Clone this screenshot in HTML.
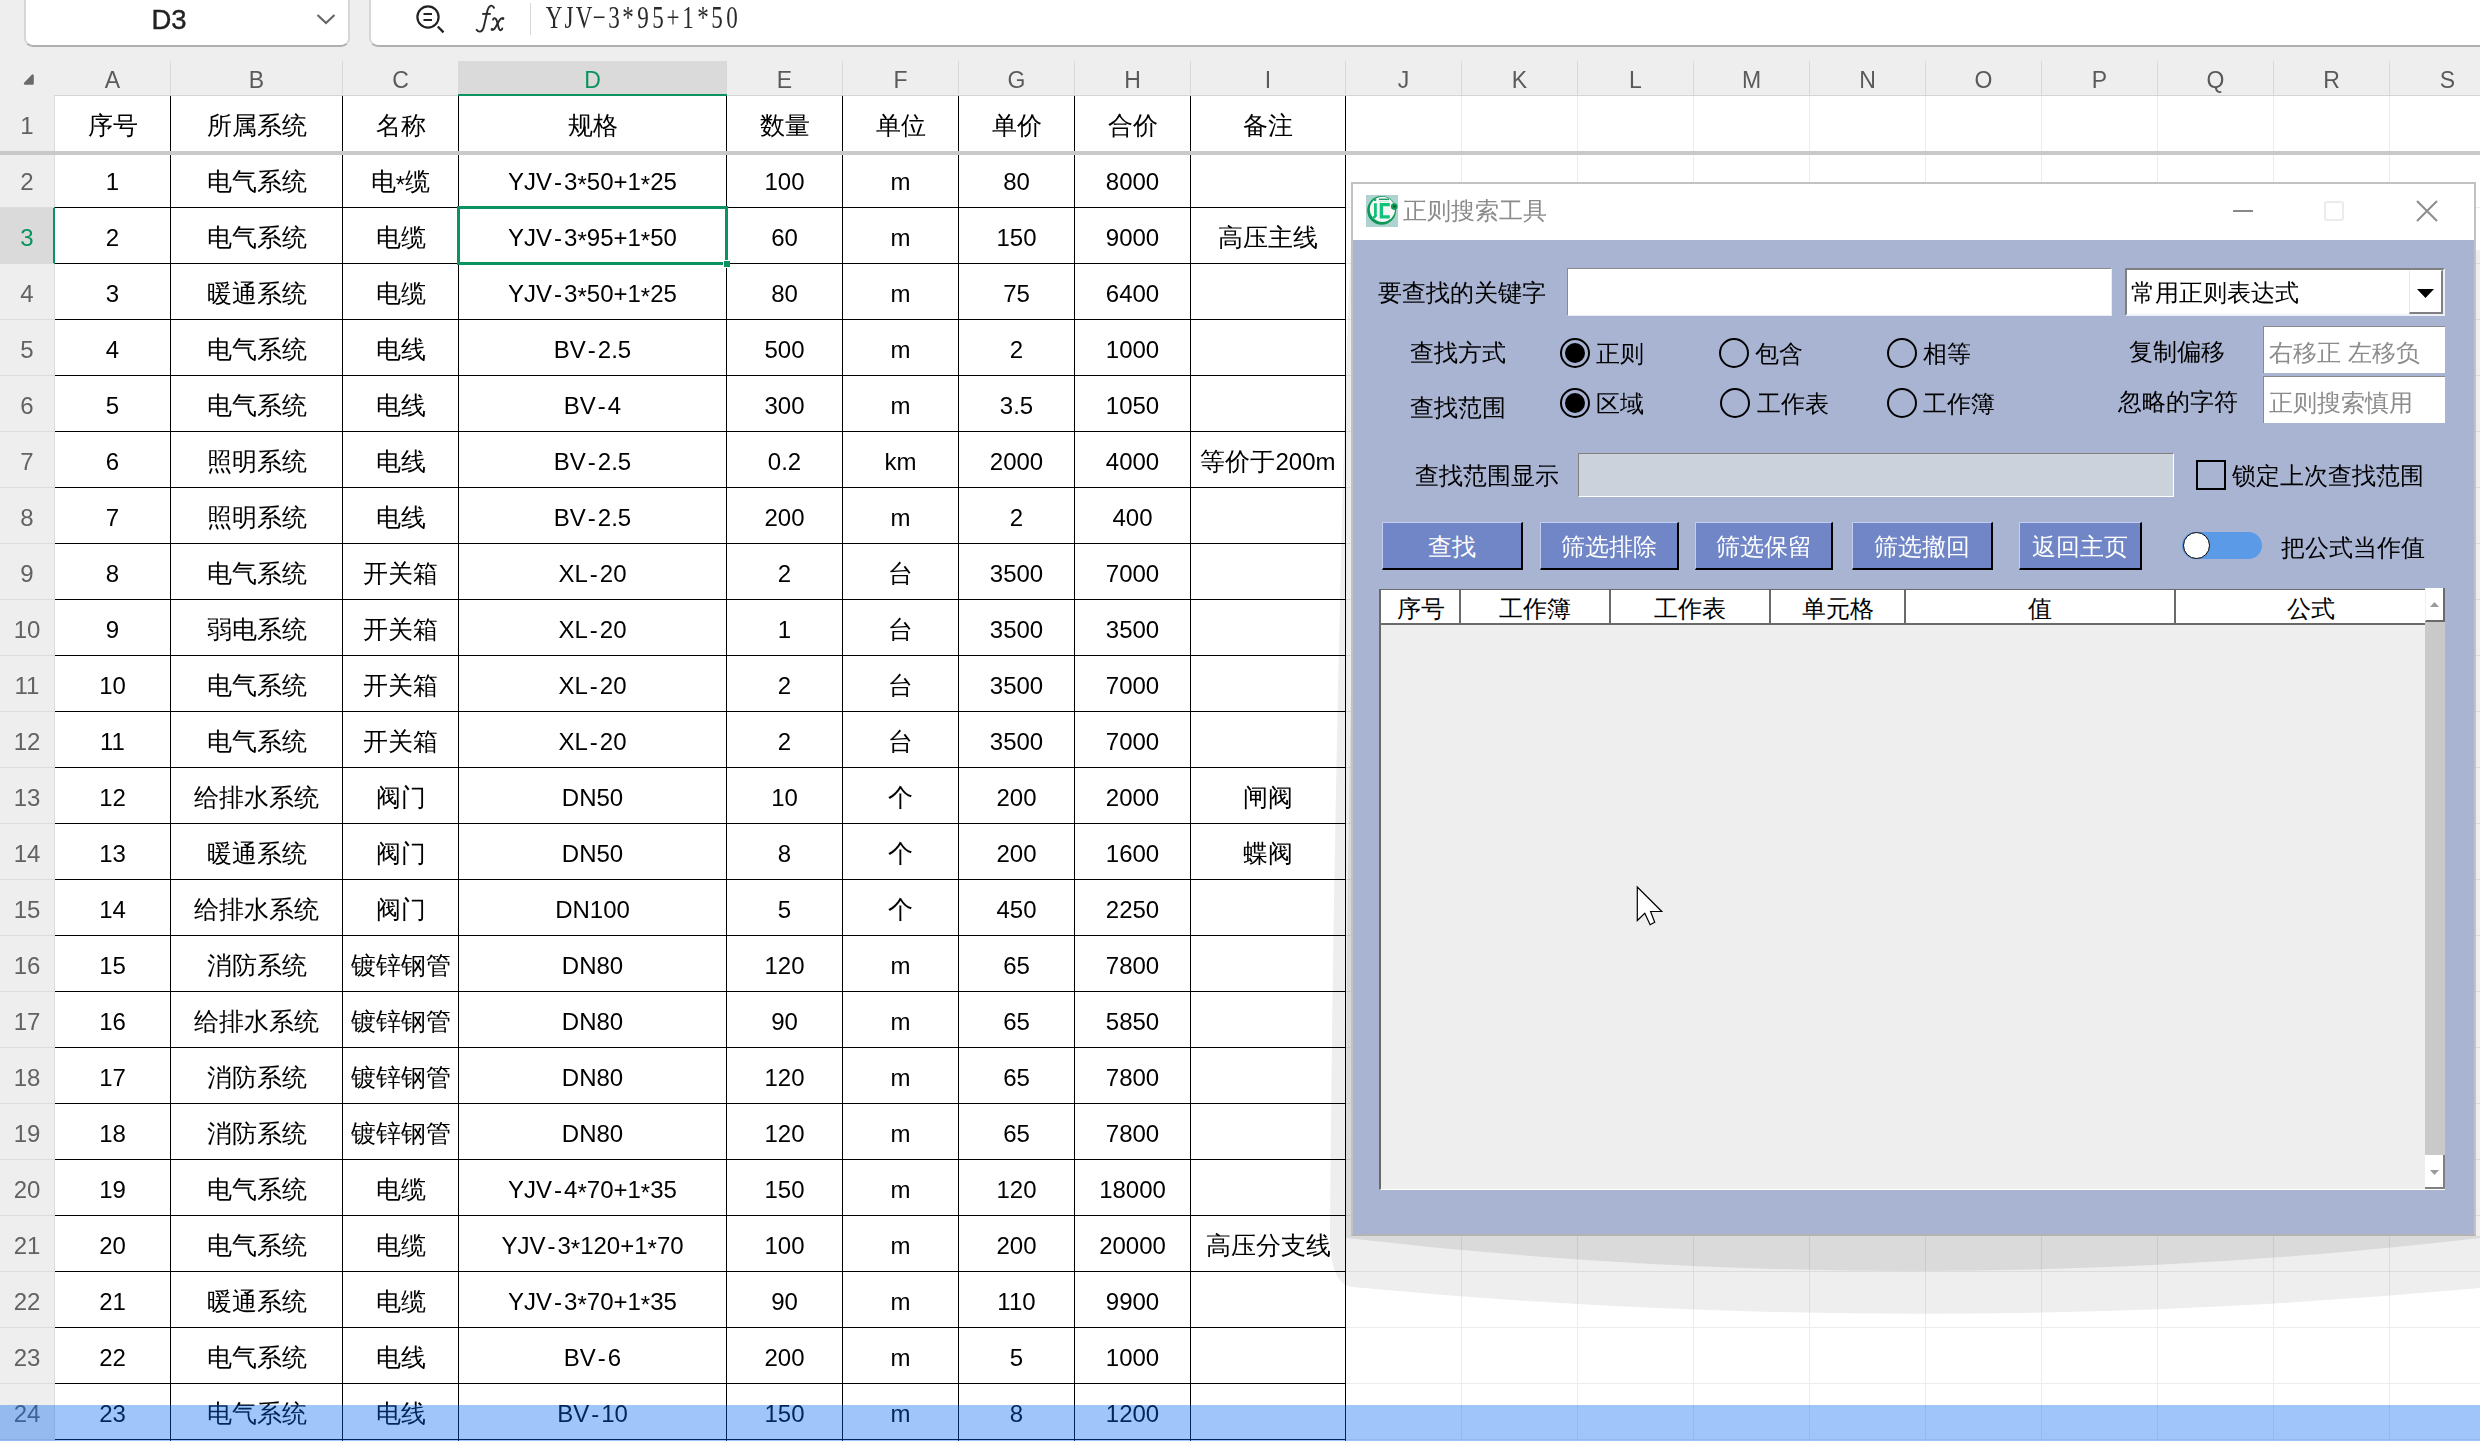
<!DOCTYPE html><html><head><meta charset="utf-8"><style>

*{margin:0;padding:0;box-sizing:border-box}
html,body{width:2480px;height:1441px;overflow:hidden;background:#eeeeee;font-family:"Liberation Sans",sans-serif;}
.a{position:absolute}
.t{position:absolute;height:56px;line-height:56px;text-align:center;white-space:nowrap;font-size:25px;color:#000}
.ch{position:absolute;top:63px;height:34px;line-height:34px;text-align:center;font-size:23px;color:#444}
.rn{position:absolute;left:0;width:54px;height:56px;line-height:56px;text-align:center;font-size:24px;color:#555}
.vl{position:absolute;width:1px;background:#000}
.la{font-size:24px}
.ast{position:relative;top:3px;font-size:24px}
.hy{margin:0 2px}
.hl{position:absolute;height:1px;background:#000}
.dl{position:absolute;font-size:24px;line-height:30px;white-space:nowrap;color:#000;margin-top:1px}
.btn{position:absolute;top:522px;height:48px;background:#7086c6;border-top:1px solid #c4ccf4;border-left:1px solid #c4ccf4;border-right:2px solid #000;border-bottom:2px solid #000;color:#fff;font-size:24px;line-height:47px;text-align:center;white-space:nowrap}
.radio{position:absolute;width:30px;height:30px;border:2px solid #000;border-radius:50%}
.radio.on::after{content:"";position:absolute;left:3px;top:3px;width:20px;height:20px;border-radius:50%;background:#000}

</style></head><body>
<div class="a" style="left:24px;top:-12px;width:326px;height:59px;background:#fff;border-left:2px solid #d6d6d6;border-right:2px solid #d6d6d6;border-bottom:2px solid #b0b0b0;border-radius:0 0 9px 9px"></div>
<div class="a" style="left:130px;top:5px;width:78px;height:30px;line-height:30px;text-align:center;font-size:27.5px;color:#222;-webkit-text-stroke:0.4px #222">D3</div>
<svg class="a" style="left:310px;top:8px" width="30" height="22"><path d="M7.5 7 L16 15 L24.5 7" fill="none" stroke="#666" stroke-width="2.2"/></svg>
<div class="a" style="left:369px;top:-12px;width:2200px;height:59px;background:#fff;border-left:2px solid #d6d6d6;border-bottom:2px solid #b0b0b0;border-radius:0 0 0 9px"></div>
<svg class="a" style="left:410px;top:0px" width="40" height="40"><circle cx="28" cy="17" r="10.6" fill="none" stroke="#222" stroke-width="2.2" transform="translate(-10,0)"/><path d="M13.5 14 H22 M13.5 20 H22" stroke="#222" stroke-width="2"/><path d="M27.8 26.5 L33.5 32.3" stroke="#222" stroke-width="2.4"/></svg>
<svg class="a" style="left:470px;top:0px" width="40" height="40"><g fill="none" stroke="#2a2a2a" stroke-width="1.9" stroke-linecap="round"><path d="M24 7.8 Q22.5 5 20.5 5.8 Q18.5 6.6 17.6 10 L14 26 Q12.8 31.5 9.8 31.6 Q7.8 31.7 6.6 29.8"/><path d="M12.2 13.9 H20.8" stroke-linecap="butt"/><path d="M23 19.6 Q24.2 17.4 25.6 18.6 Q27 20 28 25 Q29 30 30.5 30.3 Q31.8 30.2 32.3 28.5"/><path d="M33.2 18.6 Q32 17.5 30.4 19.2 Q28.5 21.5 26.5 25.5 Q24.2 30.2 22.4 29.8"/></g><circle cx="33" cy="18.6" r="1.3" fill="#2a2a2a"/><circle cx="22" cy="29.4" r="1.3" fill="#2a2a2a"/></svg>
<div class="a" style="left:530px;top:3px;width:1px;height:32px;background:#d8d8d8"></div>
<div id="fml" class="a" style="left:0;top:-2px;width:0;height:38px;line-height:38px;font-family:'Liberation Serif',serif;font-size:32px;color:#2a2a2a;white-space:nowrap"><div style="position:absolute;left:554.12px;top:0;transform:translateX(-50%) scaleX(0.72)">Y</div><div style="position:absolute;left:568.98px;top:0;transform:translateX(-50%) scaleX(0.72)">J</div><div style="position:absolute;left:583.83px;top:0;transform:translateX(-50%) scaleX(0.72)">V</div><div style="position:absolute;left:598.68px;top:0;transform:translateX(-50%) scaleX(0.72)">−</div><div style="position:absolute;left:613.53px;top:0;transform:translateX(-50%) scaleX(0.72)">3</div><div style="position:absolute;left:628.38px;top:0;transform:translateX(-50%) scaleX(0.72)">*</div><div style="position:absolute;left:643.23px;top:0;transform:translateX(-50%) scaleX(0.72)">9</div><div style="position:absolute;left:658.08px;top:0;transform:translateX(-50%) scaleX(0.72)">5</div><div style="position:absolute;left:672.93px;top:0;transform:translateX(-50%) scaleX(0.72)">+</div><div style="position:absolute;left:687.78px;top:0;transform:translateX(-50%) scaleX(0.72)">1</div><div style="position:absolute;left:702.62px;top:0;transform:translateX(-50%) scaleX(0.72)">*</div><div style="position:absolute;left:717.48px;top:0;transform:translateX(-50%) scaleX(0.72)">5</div><div style="position:absolute;left:732.33px;top:0;transform:translateX(-50%) scaleX(0.72)">0</div></div>
<div class="a" style="left:0;top:61px;width:2480px;height:34px;background:#eeeeee"></div>
<div class="a" style="left:459px;top:61px;width:267px;height:34px;background:#dadada"></div>
<div class="a" style="left:54px;top:95px;width:2426px;height:1px;background:#d4d4d4"></div>
<div class="a" style="left:170px;top:61px;width:1px;height:34px;background:#d9d9d9"></div>
<div class="a" style="left:342px;top:61px;width:1px;height:34px;background:#d9d9d9"></div>
<div class="a" style="left:458px;top:61px;width:1px;height:34px;background:#d9d9d9"></div>
<div class="a" style="left:726px;top:61px;width:1px;height:34px;background:#d9d9d9"></div>
<div class="a" style="left:842px;top:61px;width:1px;height:34px;background:#d9d9d9"></div>
<div class="a" style="left:958px;top:61px;width:1px;height:34px;background:#d9d9d9"></div>
<div class="a" style="left:1074px;top:61px;width:1px;height:34px;background:#d9d9d9"></div>
<div class="a" style="left:1190px;top:61px;width:1px;height:34px;background:#d9d9d9"></div>
<div class="a" style="left:1345px;top:61px;width:1px;height:34px;background:#d9d9d9"></div>
<div class="a" style="left:1461px;top:61px;width:1px;height:34px;background:#d9d9d9"></div>
<div class="a" style="left:1577px;top:61px;width:1px;height:34px;background:#d9d9d9"></div>
<div class="a" style="left:1693px;top:61px;width:1px;height:34px;background:#d9d9d9"></div>
<div class="a" style="left:1809px;top:61px;width:1px;height:34px;background:#d9d9d9"></div>
<div class="a" style="left:1925px;top:61px;width:1px;height:34px;background:#d9d9d9"></div>
<div class="a" style="left:2041px;top:61px;width:1px;height:34px;background:#d9d9d9"></div>
<div class="a" style="left:2157px;top:61px;width:1px;height:34px;background:#d9d9d9"></div>
<div class="a" style="left:2273px;top:61px;width:1px;height:34px;background:#d9d9d9"></div>
<div class="a" style="left:2389px;top:61px;width:1px;height:34px;background:#d9d9d9"></div>
<div class="a" style="left:2505px;top:61px;width:1px;height:34px;background:#d9d9d9"></div>
<svg class="a" style="left:20px;top:71px" width="18" height="18"><path d="M12.6 4.6 L12.6 12.6 L5 12.6 Z" fill="#6a6a6a" stroke="#6a6a6a" stroke-width="2.4" stroke-linejoin="round"/></svg>
<div class="ch" style="left:55px;width:115px;color:#5a5a5a">A</div>
<div class="ch" style="left:171px;width:171px;color:#5a5a5a">B</div>
<div class="ch" style="left:343px;width:115px;color:#5a5a5a">C</div>
<div class="ch" style="left:459px;width:267px;color:#0a935e">D</div>
<div class="ch" style="left:727px;width:115px;color:#5a5a5a">E</div>
<div class="ch" style="left:843px;width:115px;color:#5a5a5a">F</div>
<div class="ch" style="left:959px;width:115px;color:#5a5a5a">G</div>
<div class="ch" style="left:1075px;width:115px;color:#5a5a5a">H</div>
<div class="ch" style="left:1191px;width:154px;color:#5a5a5a">I</div>
<div class="ch" style="left:1346px;width:115px;color:#5a5a5a">J</div>
<div class="ch" style="left:1462px;width:115px;color:#5a5a5a">K</div>
<div class="ch" style="left:1578px;width:115px;color:#5a5a5a">L</div>
<div class="ch" style="left:1694px;width:115px;color:#5a5a5a">M</div>
<div class="ch" style="left:1810px;width:115px;color:#5a5a5a">N</div>
<div class="ch" style="left:1926px;width:115px;color:#5a5a5a">O</div>
<div class="ch" style="left:2042px;width:115px;color:#5a5a5a">P</div>
<div class="ch" style="left:2158px;width:115px;color:#5a5a5a">Q</div>
<div class="ch" style="left:2274px;width:115px;color:#5a5a5a">R</div>
<div class="ch" style="left:2390px;width:115px;color:#5a5a5a">S</div>
<div class="a" style="left:458px;top:94px;width:269px;height:2px;background:#0a935e"></div>
<div class="a" style="left:55px;top:96px;width:2425px;height:1345px;background:#fff"></div>
<div class="a" style="left:0;top:96px;width:54px;height:1345px;background:#eeeeee"></div>
<div class="a" style="left:54px;top:95px;width:1px;height:1346px;background:#dcdcdc"></div>
<div class="a" style="left:0;top:207px;width:53px;height:57px;background:#dadada"></div>
<div class="a" style="left:53px;top:207px;width:2px;height:57px;background:#0a935e"></div>
<div class="a" style="left:0;top:207px;width:54px;height:1px;background:#dcdcdc"></div>
<div class="a" style="left:0;top:263px;width:54px;height:1px;background:#dcdcdc"></div>
<div class="a" style="left:0;top:319px;width:54px;height:1px;background:#dcdcdc"></div>
<div class="a" style="left:0;top:375px;width:54px;height:1px;background:#dcdcdc"></div>
<div class="a" style="left:0;top:431px;width:54px;height:1px;background:#dcdcdc"></div>
<div class="a" style="left:0;top:487px;width:54px;height:1px;background:#dcdcdc"></div>
<div class="a" style="left:0;top:543px;width:54px;height:1px;background:#dcdcdc"></div>
<div class="a" style="left:0;top:599px;width:54px;height:1px;background:#dcdcdc"></div>
<div class="a" style="left:0;top:655px;width:54px;height:1px;background:#dcdcdc"></div>
<div class="a" style="left:0;top:711px;width:54px;height:1px;background:#dcdcdc"></div>
<div class="a" style="left:0;top:767px;width:54px;height:1px;background:#dcdcdc"></div>
<div class="a" style="left:0;top:823px;width:54px;height:1px;background:#dcdcdc"></div>
<div class="a" style="left:0;top:879px;width:54px;height:1px;background:#dcdcdc"></div>
<div class="a" style="left:0;top:935px;width:54px;height:1px;background:#dcdcdc"></div>
<div class="a" style="left:0;top:991px;width:54px;height:1px;background:#dcdcdc"></div>
<div class="a" style="left:0;top:1047px;width:54px;height:1px;background:#dcdcdc"></div>
<div class="a" style="left:0;top:1103px;width:54px;height:1px;background:#dcdcdc"></div>
<div class="a" style="left:0;top:1159px;width:54px;height:1px;background:#dcdcdc"></div>
<div class="a" style="left:0;top:1215px;width:54px;height:1px;background:#dcdcdc"></div>
<div class="a" style="left:0;top:1271px;width:54px;height:1px;background:#dcdcdc"></div>
<div class="a" style="left:0;top:1327px;width:54px;height:1px;background:#dcdcdc"></div>
<div class="a" style="left:0;top:1383px;width:54px;height:1px;background:#dcdcdc"></div>
<div class="a" style="left:0;top:1439px;width:54px;height:1px;background:#dcdcdc"></div>
<div class="a" style="left:1461px;top:96px;width:1px;height:1345px;background:#ececec"></div>
<div class="a" style="left:1577px;top:96px;width:1px;height:1345px;background:#ececec"></div>
<div class="a" style="left:1693px;top:96px;width:1px;height:1345px;background:#ececec"></div>
<div class="a" style="left:1809px;top:96px;width:1px;height:1345px;background:#ececec"></div>
<div class="a" style="left:1925px;top:96px;width:1px;height:1345px;background:#ececec"></div>
<div class="a" style="left:2041px;top:96px;width:1px;height:1345px;background:#ececec"></div>
<div class="a" style="left:2157px;top:96px;width:1px;height:1345px;background:#ececec"></div>
<div class="a" style="left:2273px;top:96px;width:1px;height:1345px;background:#ececec"></div>
<div class="a" style="left:2389px;top:96px;width:1px;height:1345px;background:#ececec"></div>
<div class="a" style="left:2505px;top:96px;width:1px;height:1345px;background:#ececec"></div>
<div class="a" style="left:1346px;top:207px;width:1134px;height:1px;background:#ececec"></div>
<div class="a" style="left:1346px;top:263px;width:1134px;height:1px;background:#ececec"></div>
<div class="a" style="left:1346px;top:319px;width:1134px;height:1px;background:#ececec"></div>
<div class="a" style="left:1346px;top:375px;width:1134px;height:1px;background:#ececec"></div>
<div class="a" style="left:1346px;top:431px;width:1134px;height:1px;background:#ececec"></div>
<div class="a" style="left:1346px;top:487px;width:1134px;height:1px;background:#ececec"></div>
<div class="a" style="left:1346px;top:543px;width:1134px;height:1px;background:#ececec"></div>
<div class="a" style="left:1346px;top:599px;width:1134px;height:1px;background:#ececec"></div>
<div class="a" style="left:1346px;top:655px;width:1134px;height:1px;background:#ececec"></div>
<div class="a" style="left:1346px;top:711px;width:1134px;height:1px;background:#ececec"></div>
<div class="a" style="left:1346px;top:767px;width:1134px;height:1px;background:#ececec"></div>
<div class="a" style="left:1346px;top:823px;width:1134px;height:1px;background:#ececec"></div>
<div class="a" style="left:1346px;top:879px;width:1134px;height:1px;background:#ececec"></div>
<div class="a" style="left:1346px;top:935px;width:1134px;height:1px;background:#ececec"></div>
<div class="a" style="left:1346px;top:991px;width:1134px;height:1px;background:#ececec"></div>
<div class="a" style="left:1346px;top:1047px;width:1134px;height:1px;background:#ececec"></div>
<div class="a" style="left:1346px;top:1103px;width:1134px;height:1px;background:#ececec"></div>
<div class="a" style="left:1346px;top:1159px;width:1134px;height:1px;background:#ececec"></div>
<div class="a" style="left:1346px;top:1215px;width:1134px;height:1px;background:#ececec"></div>
<div class="a" style="left:1346px;top:1271px;width:1134px;height:1px;background:#ececec"></div>
<div class="a" style="left:1346px;top:1327px;width:1134px;height:1px;background:#ececec"></div>
<div class="a" style="left:1346px;top:1383px;width:1134px;height:1px;background:#ececec"></div>
<div class="a" style="left:1346px;top:1439px;width:1134px;height:1px;background:#ececec"></div>
<div class="vl" style="left:170px;top:96px;height:1345px"></div>
<div class="vl" style="left:342px;top:96px;height:1345px"></div>
<div class="vl" style="left:458px;top:96px;height:1345px"></div>
<div class="vl" style="left:726px;top:96px;height:1345px"></div>
<div class="vl" style="left:842px;top:96px;height:1345px"></div>
<div class="vl" style="left:958px;top:96px;height:1345px"></div>
<div class="vl" style="left:1074px;top:96px;height:1345px"></div>
<div class="vl" style="left:1190px;top:96px;height:1345px"></div>
<div class="vl" style="left:1345px;top:96px;height:1345px"></div>
<div class="hl" style="left:55px;top:207px;width:1291px"></div>
<div class="hl" style="left:55px;top:263px;width:1291px"></div>
<div class="hl" style="left:55px;top:319px;width:1291px"></div>
<div class="hl" style="left:55px;top:375px;width:1291px"></div>
<div class="hl" style="left:55px;top:431px;width:1291px"></div>
<div class="hl" style="left:55px;top:487px;width:1291px"></div>
<div class="hl" style="left:55px;top:543px;width:1291px"></div>
<div class="hl" style="left:55px;top:599px;width:1291px"></div>
<div class="hl" style="left:55px;top:655px;width:1291px"></div>
<div class="hl" style="left:55px;top:711px;width:1291px"></div>
<div class="hl" style="left:55px;top:767px;width:1291px"></div>
<div class="hl" style="left:55px;top:823px;width:1291px"></div>
<div class="hl" style="left:55px;top:879px;width:1291px"></div>
<div class="hl" style="left:55px;top:935px;width:1291px"></div>
<div class="hl" style="left:55px;top:991px;width:1291px"></div>
<div class="hl" style="left:55px;top:1047px;width:1291px"></div>
<div class="hl" style="left:55px;top:1103px;width:1291px"></div>
<div class="hl" style="left:55px;top:1159px;width:1291px"></div>
<div class="hl" style="left:55px;top:1215px;width:1291px"></div>
<div class="hl" style="left:55px;top:1271px;width:1291px"></div>
<div class="hl" style="left:55px;top:1327px;width:1291px"></div>
<div class="hl" style="left:55px;top:1383px;width:1291px"></div>
<div class="hl" style="left:55px;top:1439px;width:1291px"></div>
<div class="a" style="left:0;top:151px;width:2480px;height:4px;background:#c9c9c9"></div>
<div class="rn" style="top:98px;color:#626262">1</div>
<div class="rn" style="top:154px;color:#626262">2</div>
<div class="rn" style="top:210px;color:#0a935e">3</div>
<div class="rn" style="top:266px;color:#626262">4</div>
<div class="rn" style="top:322px;color:#626262">5</div>
<div class="rn" style="top:378px;color:#626262">6</div>
<div class="rn" style="top:434px;color:#626262">7</div>
<div class="rn" style="top:490px;color:#626262">8</div>
<div class="rn" style="top:546px;color:#626262">9</div>
<div class="rn" style="top:602px;color:#626262">10</div>
<div class="rn" style="top:658px;color:#626262">11</div>
<div class="rn" style="top:714px;color:#626262">12</div>
<div class="rn" style="top:770px;color:#626262">13</div>
<div class="rn" style="top:826px;color:#626262">14</div>
<div class="rn" style="top:882px;color:#626262">15</div>
<div class="rn" style="top:938px;color:#626262">16</div>
<div class="rn" style="top:994px;color:#626262">17</div>
<div class="rn" style="top:1050px;color:#626262">18</div>
<div class="rn" style="top:1106px;color:#626262">19</div>
<div class="rn" style="top:1162px;color:#626262">20</div>
<div class="rn" style="top:1218px;color:#626262">21</div>
<div class="rn" style="top:1274px;color:#626262">22</div>
<div class="rn" style="top:1330px;color:#626262">23</div>
<div class="rn" style="top:1386px;color:#626262">24</div>
<div class="t" style="left:55px;width:115px;top:97px">序号</div>
<div class="t" style="left:171px;width:171px;top:97px">所属系统</div>
<div class="t" style="left:343px;width:115px;top:97px">名称</div>
<div class="t" style="left:459px;width:267px;top:97px">规格</div>
<div class="t" style="left:727px;width:115px;top:97px">数量</div>
<div class="t" style="left:843px;width:115px;top:97px">单位</div>
<div class="t" style="left:959px;width:115px;top:97px">单价</div>
<div class="t" style="left:1075px;width:115px;top:97px">合价</div>
<div class="t" style="left:1191px;width:154px;top:97px">备注</div>
<div class="t" style="left:55px;width:115px;top:153px"><span class="la">1</span></div>
<div class="t" style="left:171px;width:171px;top:153px">电气系统</div>
<div class="t" style="left:343px;width:115px;top:153px">电<span class="la"><span class="ast">*</span></span>缆</div>
<div class="t" style="left:459px;width:267px;top:153px"><span class="la">YJV<span class="hy">-</span>3<span class="ast">*</span>50+1<span class="ast">*</span>25</span></div>
<div class="t" style="left:727px;width:115px;top:153px"><span class="la">100</span></div>
<div class="t" style="left:843px;width:115px;top:153px"><span class="la">m</span></div>
<div class="t" style="left:959px;width:115px;top:153px"><span class="la">80</span></div>
<div class="t" style="left:1075px;width:115px;top:153px"><span class="la">8000</span></div>
<div class="t" style="left:55px;width:115px;top:209px"><span class="la">2</span></div>
<div class="t" style="left:171px;width:171px;top:209px">电气系统</div>
<div class="t" style="left:343px;width:115px;top:209px">电缆</div>
<div class="t" style="left:459px;width:267px;top:209px"><span class="la">YJV<span class="hy">-</span>3<span class="ast">*</span>95+1<span class="ast">*</span>50</span></div>
<div class="t" style="left:727px;width:115px;top:209px"><span class="la">60</span></div>
<div class="t" style="left:843px;width:115px;top:209px"><span class="la">m</span></div>
<div class="t" style="left:959px;width:115px;top:209px"><span class="la">150</span></div>
<div class="t" style="left:1075px;width:115px;top:209px"><span class="la">9000</span></div>
<div class="t" style="left:1191px;width:154px;top:209px">高压主线</div>
<div class="t" style="left:55px;width:115px;top:265px"><span class="la">3</span></div>
<div class="t" style="left:171px;width:171px;top:265px">暖通系统</div>
<div class="t" style="left:343px;width:115px;top:265px">电缆</div>
<div class="t" style="left:459px;width:267px;top:265px"><span class="la">YJV<span class="hy">-</span>3<span class="ast">*</span>50+1<span class="ast">*</span>25</span></div>
<div class="t" style="left:727px;width:115px;top:265px"><span class="la">80</span></div>
<div class="t" style="left:843px;width:115px;top:265px"><span class="la">m</span></div>
<div class="t" style="left:959px;width:115px;top:265px"><span class="la">75</span></div>
<div class="t" style="left:1075px;width:115px;top:265px"><span class="la">6400</span></div>
<div class="t" style="left:55px;width:115px;top:321px"><span class="la">4</span></div>
<div class="t" style="left:171px;width:171px;top:321px">电气系统</div>
<div class="t" style="left:343px;width:115px;top:321px">电线</div>
<div class="t" style="left:459px;width:267px;top:321px"><span class="la">BV<span class="hy">-</span>2.5</span></div>
<div class="t" style="left:727px;width:115px;top:321px"><span class="la">500</span></div>
<div class="t" style="left:843px;width:115px;top:321px"><span class="la">m</span></div>
<div class="t" style="left:959px;width:115px;top:321px"><span class="la">2</span></div>
<div class="t" style="left:1075px;width:115px;top:321px"><span class="la">1000</span></div>
<div class="t" style="left:55px;width:115px;top:377px"><span class="la">5</span></div>
<div class="t" style="left:171px;width:171px;top:377px">电气系统</div>
<div class="t" style="left:343px;width:115px;top:377px">电线</div>
<div class="t" style="left:459px;width:267px;top:377px"><span class="la">BV<span class="hy">-</span>4</span></div>
<div class="t" style="left:727px;width:115px;top:377px"><span class="la">300</span></div>
<div class="t" style="left:843px;width:115px;top:377px"><span class="la">m</span></div>
<div class="t" style="left:959px;width:115px;top:377px"><span class="la">3.5</span></div>
<div class="t" style="left:1075px;width:115px;top:377px"><span class="la">1050</span></div>
<div class="t" style="left:55px;width:115px;top:433px"><span class="la">6</span></div>
<div class="t" style="left:171px;width:171px;top:433px">照明系统</div>
<div class="t" style="left:343px;width:115px;top:433px">电线</div>
<div class="t" style="left:459px;width:267px;top:433px"><span class="la">BV<span class="hy">-</span>2.5</span></div>
<div class="t" style="left:727px;width:115px;top:433px"><span class="la">0.2</span></div>
<div class="t" style="left:843px;width:115px;top:433px"><span class="la">km</span></div>
<div class="t" style="left:959px;width:115px;top:433px"><span class="la">2000</span></div>
<div class="t" style="left:1075px;width:115px;top:433px"><span class="la">4000</span></div>
<div class="t" style="left:1191px;width:154px;top:433px">等价于<span class="la">200m</span></div>
<div class="t" style="left:55px;width:115px;top:489px"><span class="la">7</span></div>
<div class="t" style="left:171px;width:171px;top:489px">照明系统</div>
<div class="t" style="left:343px;width:115px;top:489px">电线</div>
<div class="t" style="left:459px;width:267px;top:489px"><span class="la">BV<span class="hy">-</span>2.5</span></div>
<div class="t" style="left:727px;width:115px;top:489px"><span class="la">200</span></div>
<div class="t" style="left:843px;width:115px;top:489px"><span class="la">m</span></div>
<div class="t" style="left:959px;width:115px;top:489px"><span class="la">2</span></div>
<div class="t" style="left:1075px;width:115px;top:489px"><span class="la">400</span></div>
<div class="t" style="left:55px;width:115px;top:545px"><span class="la">8</span></div>
<div class="t" style="left:171px;width:171px;top:545px">电气系统</div>
<div class="t" style="left:343px;width:115px;top:545px">开关箱</div>
<div class="t" style="left:459px;width:267px;top:545px"><span class="la">XL<span class="hy">-</span>20</span></div>
<div class="t" style="left:727px;width:115px;top:545px"><span class="la">2</span></div>
<div class="t" style="left:843px;width:115px;top:545px">台</div>
<div class="t" style="left:959px;width:115px;top:545px"><span class="la">3500</span></div>
<div class="t" style="left:1075px;width:115px;top:545px"><span class="la">7000</span></div>
<div class="t" style="left:55px;width:115px;top:601px"><span class="la">9</span></div>
<div class="t" style="left:171px;width:171px;top:601px">弱电系统</div>
<div class="t" style="left:343px;width:115px;top:601px">开关箱</div>
<div class="t" style="left:459px;width:267px;top:601px"><span class="la">XL<span class="hy">-</span>20</span></div>
<div class="t" style="left:727px;width:115px;top:601px"><span class="la">1</span></div>
<div class="t" style="left:843px;width:115px;top:601px">台</div>
<div class="t" style="left:959px;width:115px;top:601px"><span class="la">3500</span></div>
<div class="t" style="left:1075px;width:115px;top:601px"><span class="la">3500</span></div>
<div class="t" style="left:55px;width:115px;top:657px"><span class="la">10</span></div>
<div class="t" style="left:171px;width:171px;top:657px">电气系统</div>
<div class="t" style="left:343px;width:115px;top:657px">开关箱</div>
<div class="t" style="left:459px;width:267px;top:657px"><span class="la">XL<span class="hy">-</span>20</span></div>
<div class="t" style="left:727px;width:115px;top:657px"><span class="la">2</span></div>
<div class="t" style="left:843px;width:115px;top:657px">台</div>
<div class="t" style="left:959px;width:115px;top:657px"><span class="la">3500</span></div>
<div class="t" style="left:1075px;width:115px;top:657px"><span class="la">7000</span></div>
<div class="t" style="left:55px;width:115px;top:713px"><span class="la">11</span></div>
<div class="t" style="left:171px;width:171px;top:713px">电气系统</div>
<div class="t" style="left:343px;width:115px;top:713px">开关箱</div>
<div class="t" style="left:459px;width:267px;top:713px"><span class="la">XL<span class="hy">-</span>20</span></div>
<div class="t" style="left:727px;width:115px;top:713px"><span class="la">2</span></div>
<div class="t" style="left:843px;width:115px;top:713px">台</div>
<div class="t" style="left:959px;width:115px;top:713px"><span class="la">3500</span></div>
<div class="t" style="left:1075px;width:115px;top:713px"><span class="la">7000</span></div>
<div class="t" style="left:55px;width:115px;top:769px"><span class="la">12</span></div>
<div class="t" style="left:171px;width:171px;top:769px">给排水系统</div>
<div class="t" style="left:343px;width:115px;top:769px">阀门</div>
<div class="t" style="left:459px;width:267px;top:769px"><span class="la">DN50</span></div>
<div class="t" style="left:727px;width:115px;top:769px"><span class="la">10</span></div>
<div class="t" style="left:843px;width:115px;top:769px">个</div>
<div class="t" style="left:959px;width:115px;top:769px"><span class="la">200</span></div>
<div class="t" style="left:1075px;width:115px;top:769px"><span class="la">2000</span></div>
<div class="t" style="left:1191px;width:154px;top:769px">闸阀</div>
<div class="t" style="left:55px;width:115px;top:825px"><span class="la">13</span></div>
<div class="t" style="left:171px;width:171px;top:825px">暖通系统</div>
<div class="t" style="left:343px;width:115px;top:825px">阀门</div>
<div class="t" style="left:459px;width:267px;top:825px"><span class="la">DN50</span></div>
<div class="t" style="left:727px;width:115px;top:825px"><span class="la">8</span></div>
<div class="t" style="left:843px;width:115px;top:825px">个</div>
<div class="t" style="left:959px;width:115px;top:825px"><span class="la">200</span></div>
<div class="t" style="left:1075px;width:115px;top:825px"><span class="la">1600</span></div>
<div class="t" style="left:1191px;width:154px;top:825px">蝶阀</div>
<div class="t" style="left:55px;width:115px;top:881px"><span class="la">14</span></div>
<div class="t" style="left:171px;width:171px;top:881px">给排水系统</div>
<div class="t" style="left:343px;width:115px;top:881px">阀门</div>
<div class="t" style="left:459px;width:267px;top:881px"><span class="la">DN100</span></div>
<div class="t" style="left:727px;width:115px;top:881px"><span class="la">5</span></div>
<div class="t" style="left:843px;width:115px;top:881px">个</div>
<div class="t" style="left:959px;width:115px;top:881px"><span class="la">450</span></div>
<div class="t" style="left:1075px;width:115px;top:881px"><span class="la">2250</span></div>
<div class="t" style="left:55px;width:115px;top:937px"><span class="la">15</span></div>
<div class="t" style="left:171px;width:171px;top:937px">消防系统</div>
<div class="t" style="left:343px;width:115px;top:937px">镀锌钢管</div>
<div class="t" style="left:459px;width:267px;top:937px"><span class="la">DN80</span></div>
<div class="t" style="left:727px;width:115px;top:937px"><span class="la">120</span></div>
<div class="t" style="left:843px;width:115px;top:937px"><span class="la">m</span></div>
<div class="t" style="left:959px;width:115px;top:937px"><span class="la">65</span></div>
<div class="t" style="left:1075px;width:115px;top:937px"><span class="la">7800</span></div>
<div class="t" style="left:55px;width:115px;top:993px"><span class="la">16</span></div>
<div class="t" style="left:171px;width:171px;top:993px">给排水系统</div>
<div class="t" style="left:343px;width:115px;top:993px">镀锌钢管</div>
<div class="t" style="left:459px;width:267px;top:993px"><span class="la">DN80</span></div>
<div class="t" style="left:727px;width:115px;top:993px"><span class="la">90</span></div>
<div class="t" style="left:843px;width:115px;top:993px"><span class="la">m</span></div>
<div class="t" style="left:959px;width:115px;top:993px"><span class="la">65</span></div>
<div class="t" style="left:1075px;width:115px;top:993px"><span class="la">5850</span></div>
<div class="t" style="left:55px;width:115px;top:1049px"><span class="la">17</span></div>
<div class="t" style="left:171px;width:171px;top:1049px">消防系统</div>
<div class="t" style="left:343px;width:115px;top:1049px">镀锌钢管</div>
<div class="t" style="left:459px;width:267px;top:1049px"><span class="la">DN80</span></div>
<div class="t" style="left:727px;width:115px;top:1049px"><span class="la">120</span></div>
<div class="t" style="left:843px;width:115px;top:1049px"><span class="la">m</span></div>
<div class="t" style="left:959px;width:115px;top:1049px"><span class="la">65</span></div>
<div class="t" style="left:1075px;width:115px;top:1049px"><span class="la">7800</span></div>
<div class="t" style="left:55px;width:115px;top:1105px"><span class="la">18</span></div>
<div class="t" style="left:171px;width:171px;top:1105px">消防系统</div>
<div class="t" style="left:343px;width:115px;top:1105px">镀锌钢管</div>
<div class="t" style="left:459px;width:267px;top:1105px"><span class="la">DN80</span></div>
<div class="t" style="left:727px;width:115px;top:1105px"><span class="la">120</span></div>
<div class="t" style="left:843px;width:115px;top:1105px"><span class="la">m</span></div>
<div class="t" style="left:959px;width:115px;top:1105px"><span class="la">65</span></div>
<div class="t" style="left:1075px;width:115px;top:1105px"><span class="la">7800</span></div>
<div class="t" style="left:55px;width:115px;top:1161px"><span class="la">19</span></div>
<div class="t" style="left:171px;width:171px;top:1161px">电气系统</div>
<div class="t" style="left:343px;width:115px;top:1161px">电缆</div>
<div class="t" style="left:459px;width:267px;top:1161px"><span class="la">YJV<span class="hy">-</span>4<span class="ast">*</span>70+1<span class="ast">*</span>35</span></div>
<div class="t" style="left:727px;width:115px;top:1161px"><span class="la">150</span></div>
<div class="t" style="left:843px;width:115px;top:1161px"><span class="la">m</span></div>
<div class="t" style="left:959px;width:115px;top:1161px"><span class="la">120</span></div>
<div class="t" style="left:1075px;width:115px;top:1161px"><span class="la">18000</span></div>
<div class="t" style="left:55px;width:115px;top:1217px"><span class="la">20</span></div>
<div class="t" style="left:171px;width:171px;top:1217px">电气系统</div>
<div class="t" style="left:343px;width:115px;top:1217px">电缆</div>
<div class="t" style="left:459px;width:267px;top:1217px"><span class="la">YJV<span class="hy">-</span>3<span class="ast">*</span>120+1<span class="ast">*</span>70</span></div>
<div class="t" style="left:727px;width:115px;top:1217px"><span class="la">100</span></div>
<div class="t" style="left:843px;width:115px;top:1217px"><span class="la">m</span></div>
<div class="t" style="left:959px;width:115px;top:1217px"><span class="la">200</span></div>
<div class="t" style="left:1075px;width:115px;top:1217px"><span class="la">20000</span></div>
<div class="t" style="left:1191px;width:154px;top:1217px">高压分支线</div>
<div class="t" style="left:55px;width:115px;top:1273px"><span class="la">21</span></div>
<div class="t" style="left:171px;width:171px;top:1273px">暖通系统</div>
<div class="t" style="left:343px;width:115px;top:1273px">电缆</div>
<div class="t" style="left:459px;width:267px;top:1273px"><span class="la">YJV<span class="hy">-</span>3<span class="ast">*</span>70+1<span class="ast">*</span>35</span></div>
<div class="t" style="left:727px;width:115px;top:1273px"><span class="la">90</span></div>
<div class="t" style="left:843px;width:115px;top:1273px"><span class="la">m</span></div>
<div class="t" style="left:959px;width:115px;top:1273px"><span class="la">110</span></div>
<div class="t" style="left:1075px;width:115px;top:1273px"><span class="la">9900</span></div>
<div class="t" style="left:55px;width:115px;top:1329px"><span class="la">22</span></div>
<div class="t" style="left:171px;width:171px;top:1329px">电气系统</div>
<div class="t" style="left:343px;width:115px;top:1329px">电线</div>
<div class="t" style="left:459px;width:267px;top:1329px"><span class="la">BV<span class="hy">-</span>6</span></div>
<div class="t" style="left:727px;width:115px;top:1329px"><span class="la">200</span></div>
<div class="t" style="left:843px;width:115px;top:1329px"><span class="la">m</span></div>
<div class="t" style="left:959px;width:115px;top:1329px"><span class="la">5</span></div>
<div class="t" style="left:1075px;width:115px;top:1329px"><span class="la">1000</span></div>
<div class="t" style="left:55px;width:115px;top:1385px"><span class="la">23</span></div>
<div class="t" style="left:171px;width:171px;top:1385px">电气系统</div>
<div class="t" style="left:343px;width:115px;top:1385px">电线</div>
<div class="t" style="left:459px;width:267px;top:1385px"><span class="la">BV<span class="hy">-</span>10</span></div>
<div class="t" style="left:727px;width:115px;top:1385px"><span class="la">150</span></div>
<div class="t" style="left:843px;width:115px;top:1385px"><span class="la">m</span></div>
<div class="t" style="left:959px;width:115px;top:1385px"><span class="la">8</span></div>
<div class="t" style="left:1075px;width:115px;top:1385px"><span class="la">1200</span></div>
<div class="a" style="left:457px;top:206px;width:271px;height:59px;border:3px solid #0a935e"></div>
<div class="a" style="left:723px;top:259px;width:6px;height:9px;background:#fff"></div>
<div class="a" style="left:720px;top:261px;width:10px;height:6px;background:#fff"></div>
<div class="a" style="left:725px;top:250px;width:3px;height:10px;background:#0a935e"></div>
<div class="a" style="left:715px;top:262px;width:8px;height:3px;background:#0a935e"></div>
<div class="a" style="left:724px;top:261px;width:6px;height:6px;background:#0a935e"></div>
<svg class="a" style="left:0;top:0;mix-blend-mode:multiply" width="2480" height="1441"><path d="M1351 240 C1343 420 1332 900 1330 1240 Q1331 1284 1352 1287 Q1914 1340 2480 1288 L2480 250 L2476 250 L2476 240 Z" fill="#eeeeee"/><path d="M1351 690 C1348 850 1346 1000 1346 1238 Q1914 1304 2480 1238 L2480 1236 L2476 1236 L2476 690 Z" fill="#dadada"/></svg>
<div class="a" style="left:1351px;top:182px;width:1125px;height:1054px;border:2px solid #c2c2c2;border-bottom-color:#b4b4b4;background:#a9b4d3"></div>
<div class="a" style="left:1353px;top:184px;width:1121px;height:56px;background:#fff"></div>
<svg class="a" style="left:1366px;top:195px" width="32" height="32"><rect width="32" height="32" fill="#add2d0"/><circle cx="15.6" cy="15.4" r="14.4" fill="#0c9856"/><circle cx="16.4" cy="14.3" r="12.6" fill="#f6f6f6"/><rect x="8" y="8.2" width="2.8" height="13.2" fill="#12c27a"/><path d="M9.4 20 Q9.4 23 6.6 22.2" fill="none" stroke="#12c27a" stroke-width="2.6"/><rect x="8" y="3.6" width="2.2" height="2.4" fill="#12b06e"/><path d="M23.8 9.6 H15.4 V21.9 H23.8" fill="none" stroke="#12c27a" stroke-width="3.3"/><path d="M13 4.3 H23" stroke="#15935c" stroke-width="1.3"/><path d="M13 6.3 H23" stroke="#bdf0d0" stroke-width="1"/><circle cx="28.2" cy="11.6" r="3.3" fill="#0c9a56"/><circle cx="28.4" cy="11.4" r="1.3" fill="#0a5a34"/></svg>
<div class="a" style="left:1403px;top:196px;height:30px;line-height:30px;font-size:24px;color:#8a8a8a;white-space:nowrap">正则搜索工具</div>
<div class="a" style="left:2233px;top:210px;width:20px;height:2px;background:#888"></div>
<div class="a" style="left:2324px;top:201px;width:20px;height:20px;border:2px solid #ebebeb;border-radius:3px"></div>
<svg class="a" style="left:2414px;top:198px" width="26" height="26"><path d="M3 3 L23 23 M23 3 L3 23" stroke="#8c8c8c" stroke-width="2"/></svg>
<div class="dl" style="left:1378px;top:277px">要查找的关键字</div>
<div class="a" style="left:1567px;top:268px;width:545px;height:48px;background:#fff;border-top:1px solid #8a8a8a;border-left:1px solid #8a8a8a;border-bottom:1px solid #e8ecf6;border-right:1px solid #e8ecf6"></div>
<div class="a" style="left:2125px;top:268px;width:320px;height:48px;background:#fff;border-top:2px solid #808080;border-left:2px solid #808080;border-bottom:2px solid #eef0f8;border-right:2px solid #eef0f8"></div>
<div class="dl" style="left:2131px;top:277px">常用正则表达式</div>
<div class="a" style="left:2409px;top:270px;width:34px;height:44px;background:#fff;border-left:1px solid #e6e6e6;border-top:1px solid #fff;border-right:2px solid #808080;border-bottom:2px solid #808080"></div>
<svg class="a" style="left:2415px;top:286px" width="22" height="14"><path d="M2 3 L19 3 L10.5 12 Z" fill="#000"/></svg>
<div class="dl" style="left:1410px;top:337px">查找方式</div>
<div class="dl" style="left:1410px;top:392px">查找范围</div>
<div class="radio on" style="left:1560px;top:338px"></div>
<div class="dl" style="left:1596px;top:338px">正则</div>
<div class="radio" style="left:1719px;top:338px"></div>
<div class="dl" style="left:1755px;top:338px">包含</div>
<div class="radio" style="left:1887px;top:338px"></div>
<div class="dl" style="left:1923px;top:338px">相等</div>
<div class="radio on" style="left:1560px;top:388px"></div>
<div class="dl" style="left:1596px;top:388px">区域</div>
<div class="radio" style="left:1720px;top:388px"></div>
<div class="dl" style="left:1757px;top:388px">工作表</div>
<div class="radio" style="left:1887px;top:388px"></div>
<div class="dl" style="left:1923px;top:388px">工作簿</div>
<div class="dl" style="left:2129px;top:336px">复制偏移</div>
<div class="dl" style="left:2118px;top:386px">忽略的字符</div>
<div class="a" style="left:2263px;top:326px;width:182px;height:47px;background:#fff;border-top:1px solid #8a8a8a;border-left:1px solid #8a8a8a"></div>
<div class="a" style="left:2263px;top:376px;width:182px;height:47px;background:#fff;border-top:1px solid #8a8a8a;border-left:1px solid #8a8a8a"></div>
<div class="dl" style="left:2269px;top:337px;color:#8c8c8c">右移正 左移负</div>
<div class="dl" style="left:2269px;top:387px;color:#8c8c8c">正则搜索慎用</div>
<div class="dl" style="left:1415px;top:460px">查找范围显示</div>
<div class="a" style="left:1578px;top:453px;width:596px;height:44px;background:#cbd2dc;border-top:1px solid #808080;border-left:1px solid #808080;border-bottom:1px solid #fff;border-right:1px solid #fff"></div>
<div class="a" style="left:2196px;top:460px;width:30px;height:30px;border:2px solid #000"></div>
<div class="dl" style="left:2232px;top:460px">锁定上次查找范围</div>
<div class="btn" style="left:1382px;width:141px">查找</div>
<div class="btn" style="left:1540px;width:139px">筛选排除</div>
<div class="btn" style="left:1695px;width:138px">筛选保留</div>
<div class="btn" style="left:1852px;width:141px">筛选撤回</div>
<div class="btn" style="left:2019px;width:123px">返回主页</div>
<div class="a" style="left:2182px;top:532px;width:80px;height:27px;border-radius:14px;background:#5a9ae6"></div>
<div class="a" style="left:2183px;top:532px;width:27px;height:27px;border-radius:50%;background:#fff;border:1px solid #000"></div>
<div class="dl" style="left:2281px;top:532px">把公式当作值</div>
<div class="a" style="left:1379px;top:589px;width:1066px;height:601px;background:#eeeeee;border-top:1px solid #6a6a6a;border-left:2px solid #6a6a6a;border-bottom:1px solid #fff;border-right:1px solid #fff"></div>
<div class="a" style="left:1381px;top:590px;width:1064px;height:33px;background:#fff"></div>
<div class="a" style="left:1381px;top:623px;width:1064px;height:2px;background:#6a6a6a"></div>
<div class="a" style="left:1459px;top:590px;width:2px;height:34px;background:#6a6a6a"></div>
<div class="a" style="left:1609px;top:590px;width:2px;height:34px;background:#6a6a6a"></div>
<div class="a" style="left:1769px;top:590px;width:2px;height:34px;background:#6a6a6a"></div>
<div class="a" style="left:1904px;top:590px;width:2px;height:34px;background:#6a6a6a"></div>
<div class="a" style="left:2174px;top:590px;width:2px;height:34px;background:#6a6a6a"></div>
<div class="a" style="left:1381px;top:590px;width:79px;height:34px;font-size:24px;line-height:37px;text-align:center;white-space:nowrap">序号</div>
<div class="a" style="left:1460px;top:590px;width:150px;height:34px;font-size:24px;line-height:37px;text-align:center;white-space:nowrap">工作簿</div>
<div class="a" style="left:1610px;top:590px;width:160px;height:34px;font-size:24px;line-height:37px;text-align:center;white-space:nowrap">工作表</div>
<div class="a" style="left:1770px;top:590px;width:135px;height:34px;font-size:24px;line-height:37px;text-align:center;white-space:nowrap">单元格</div>
<div class="a" style="left:1905px;top:590px;width:270px;height:34px;font-size:24px;line-height:37px;text-align:center;white-space:nowrap">值</div>
<div class="a" style="left:2175px;top:590px;width:272px;height:34px;font-size:24px;line-height:37px;text-align:center;white-space:nowrap">公式</div>
<div class="a" style="left:2425px;top:589px;width:20px;height:600px;background:#c9c9c9"></div>
<div class="a" style="left:2425px;top:588px;width:20px;height:34px;background:#fff;border-right:2px solid #6a6a6a;border-bottom:2px solid #6a6a6a;border-left:1px solid #f0f0f0"></div>
<svg class="a" style="left:2425px;top:588px" width="20" height="34"><path d="M5 19 L14 19 L9.5 14 Z" fill="#9a9a9a"/></svg>
<div class="a" style="left:2425px;top:1155px;width:20px;height:34px;background:#fff;border-right:2px solid #808080;border-bottom:2px solid #808080"></div>
<svg class="a" style="left:2425px;top:1155px" width="20" height="34"><path d="M5 15 L14 15 L9.5 20 Z" fill="#9a9a9a"/></svg>
<svg class="a" style="left:1630px;top:880px" width="40" height="50"><path d="M7.3 7 L7.3 40.5 L14.8 33.2 L20.1 44.7 L24.7 42.2 L20.6 31.5 L31.8 31.5 Z" fill="#fff" stroke="#000" stroke-width="1.2" stroke-linejoin="miter"/></svg>
<div class="a" style="left:0;top:1405px;width:2480px;height:36px;background:rgba(0,102,242,0.376)"></div>
</body></html>
